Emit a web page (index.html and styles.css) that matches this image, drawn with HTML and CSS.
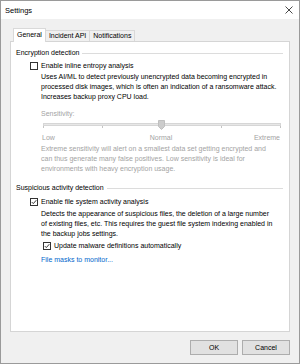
FILE: index.html
```html
<!DOCTYPE html>
<html lang="en">
  <head>
    <meta charset="UTF-8" />
    <title>Settings</title>
    <link rel="stylesheet" href="styles.css">
  </head>
  <body>
    <div class="window">
      <div class="titlebar">
        <span class="title">Settings</span>
        <svg class="close" width="8" height="8" viewBox="0 0 8 8">
          <path d="M0.5 0.5 L7.5 7.5 M7.5 0.5 L0.5 7.5" stroke="#333" stroke-width="0.9" fill="none" />
        </svg>
      </div>
      <div class="content">
        <div class="tabs">
          <div class="tab active">General</div>
          <div class="tab">Incident API</div>
          <div class="tab">Notifications</div>
        </div>
        <div class="panel">
          <div class="group">
            <div class="group-title"><span>Encryption detection</span></div>
            <div class="option">
              <div class="check"><span class="box"></span>Enable inline entropy analysis</div>
              <p class="desc">Uses AI/ML to detect previously unencrypted data becoming encrypted in<br>processed disk images, which is often an indication of a ransomware attack.<br>Increases backup proxy CPU load.</p>
              <div class="sensitivity">
                <div class="label">Sensitivity:</div>
                <div class="slider">
                  <div class="track"></div>
                  <svg class="thumb" width="7" height="10" viewBox="0 0 7 10">
                    <path d="M0.5 0.5 H6.5 V6.5 L3.5 9.5 L0.5 6.5 Z" fill="#cccccc" stroke="#bfbfbf" stroke-width="1" />
                  </svg>
                  <div class="ticks"><i></i><i></i><i></i><i></i><i></i></div>
                </div>
                <div class="scale"><span>Low</span><span>Normal</span><span>Extreme</span></div>
                <p class="desc">Extreme sensitivity will alert on a smallest data set getting encrypted and<br>can thus generate many false positives. Low sensitivity is ideal for<br>environments with heavy encryption usage.</p>
              </div>
            </div>
          </div>
          <div class="group second">
            <div class="group-title"><span>Suspicious activity detection</span></div>
            <div class="option">
              <div class="check"><span class="box checked"><svg width="6" height="6" viewBox="0 0 6 6"><path d="M0.8 3.1 L2.3 4.6 L5.3 1.2" stroke="#222" stroke-width="0.9" fill="none" /></svg></span>Enable file system activity analysis</div>
              <p class="desc">Detects the appearance of suspicious files, the deletion of a large number<br>of existing files, etc. This requires the guest file system indexing enabled in<br>the backup jobs settings.</p>
              <div class="check nested"><span class="box checked"><svg width="6" height="6" viewBox="0 0 6 6"><path d="M0.8 3.1 L2.3 4.6 L5.3 1.2" stroke="#222" stroke-width="0.9" fill="none" /></svg></span>Update malware definitions automatically</div>
              <a class="link" href="#">File masks to monitor...</a>
            </div>
          </div>
        </div>
        <div class="actions">
          <button>OK</button>
          <button>Cancel</button>
        </div>
      </div>
    </div>
  </body>
</html>
```
FILE: styles.css
```css
* {
  box-sizing: border-box;
}

body {
  margin: 0;
  font-family: "Liberation Sans", Arial, sans-serif;
  font-size: 7px;
  color: #000;
  background: #fff;
}

.window {
  width: 300px;
  height: 364px;
  border: 1px solid #9a9a9a;
  background: #f0f0f0;
  display: flex;
  flex-direction: column;
}

.titlebar {
  height: 18px;
  background: #fff;
  display: flex;
  align-items: center;
  justify-content: space-between;
  padding: 0 6px 0 4px;
}

.title {
  font-size: 7.5px;
}

.content {
  flex: 1;
  display: flex;
  flex-direction: column;
  padding: 9px 9px 8px;
}

.tabs {
  display: flex;
  align-items: flex-end;
  height: 14px;
  margin-bottom: -1px;
  padding-left: 3px;
}

.tab {
  height: 11px;
  line-height: 9px;
  padding: 0 3px;
  margin-bottom: 1px;
  border: 1px solid #d9d9d9;
  border-bottom: none;
  border-left: none;
  background: #f0f0f0;
}

.tab.active {
  height: 14px;
  margin-bottom: 0;
  line-height: 12px;
  border-left: 1px solid #d9d9d9;
  background: #fff;
  position: relative;
  z-index: 1;
}

.panel {
  flex: 1;
  background: #fff;
  border: 1px solid #d5d5d5;
  padding: 6px 6px 0 5px;
}

.group-title {
  display: flex;
  align-items: center;
  line-height: 10px;
}

.group-title::after {
  content: "";
  flex: 1;
  height: 1px;
  margin-left: 3px;
  background: #dcdcdc;
}

.second {
  margin-top: 9px;
}

.option {
  margin-left: 14px;
}

.check {
  display: flex;
  align-items: center;
  gap: 3px;
  line-height: 10px;
  margin-top: 3px;
}

.second .check {
  margin-top: 4px;
}

.second .check.nested {
  margin-top: 2px;
  margin-left: 13px;
}

.box {
  width: 8px;
  height: 8px;
  border: 1px solid #333;
  background: #fff;
  display: flex;
  align-items: center;
  justify-content: center;
}

.desc {
  margin: 1px 0 0 11px;
  line-height: 10px;
}

.second .desc {
  margin-top: 2px;
}

.sensitivity {
  margin-left: 11px;
  color: #a3a3a3;
}

.sensitivity .desc {
  margin: 1px 0 0;
}

.label {
  margin-top: 7px;
  line-height: 10px;
}

.slider {
  position: relative;
  height: 12px;
  margin: 0 2px 0 2px;
}

.track {
  position: relative;
  top: 4px;
  height: 3px;
  background: #e7e7e7;
  border: 1px solid #d6d6d6;
}

.thumb {
  position: absolute;
  left: 115px;
  top: 1px;
}

.ticks {
  display: flex;
  justify-content: space-between;
  margin-top: 4px;
}

.ticks i {
  width: 1px;
  height: 2px;
  background: #c4c4c4;
}

.scale {
  display: grid;
  grid-template-columns: 1fr auto 1fr;
  line-height: 10px;
  margin: 2px 3px 0 1px;
}

.scale span:last-child {
  text-align: right;
}

.link {
  display: block;
  margin: 4px 0 0 11px;
  line-height: 10px;
  color: #0066cc;
  text-decoration: none;
}

.actions {
  display: flex;
  justify-content: flex-end;
  gap: 4px;
  margin-top: 8px;
}

button {
  width: 48px;
  height: 15px;
  font-family: inherit;
  font-size: 7px;
  background: #e1e1e1;
  border: 1px solid #adadad;
  padding: 0;
}
```
